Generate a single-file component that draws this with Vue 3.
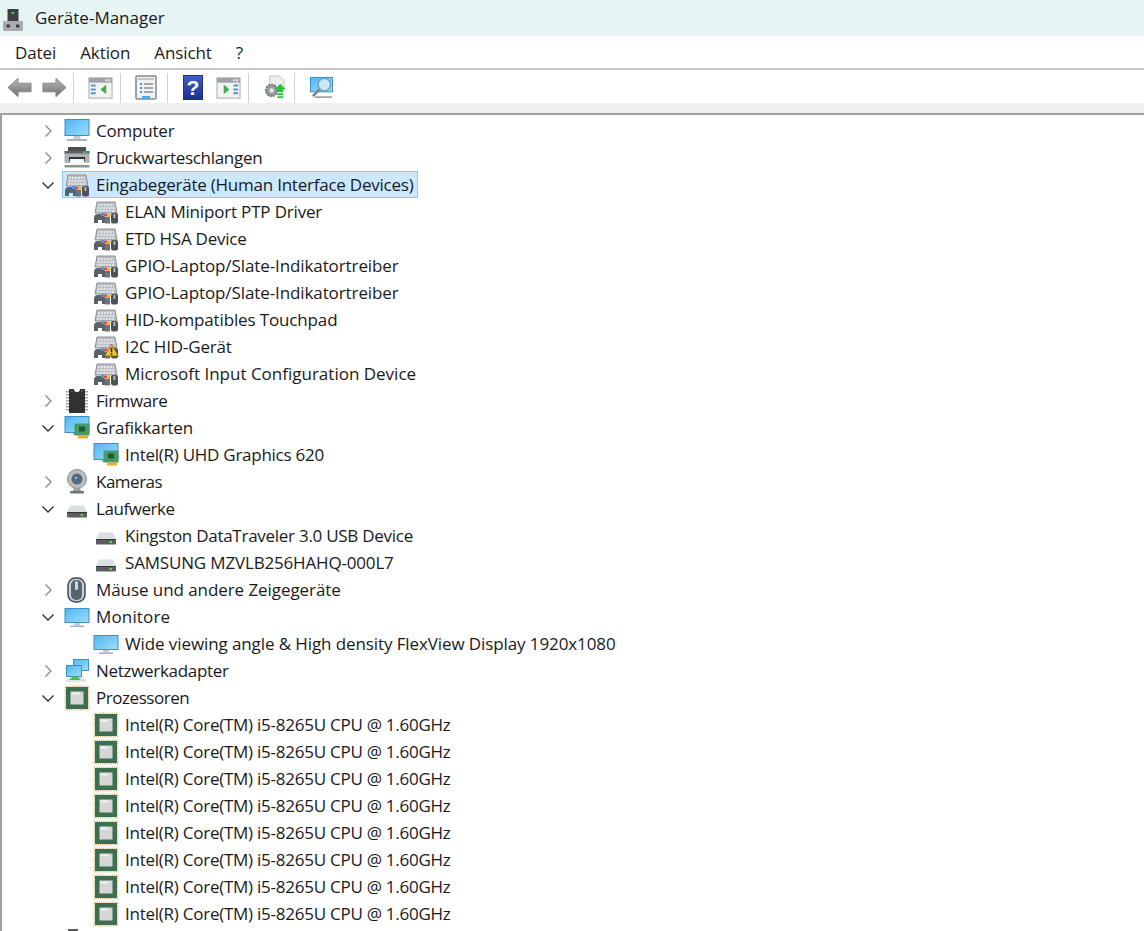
<script setup>
const cpu = 'Intel(R) Core(TM) i5-8265U CPU @ 1.60GHz'
const rows = [
  { t: 'Computer', l: 0, i: 'monitor', c: 'r', s: -0.2 },
  { t: 'Druckwarteschlangen', l: 0, i: 'printer', c: 'r', s: -0.3 },
  { t: 'Eingabegeräte (Human Interface Devices)', l: 0, i: 'hid', c: 'd', sel: true, s: -0.23 },
  { t: 'ELAN Miniport PTP Driver', l: 1, i: 'hid', s: -0.18 },
  { t: 'ETD HSA Device', l: 1, i: 'hid', s: -0.25 },
  { t: 'GPIO-Laptop/Slate-Indikatortreiber', l: 1, i: 'hid', s: -0.1 },
  { t: 'GPIO-Laptop/Slate-Indikatortreiber', l: 1, i: 'hid', s: -0.1 },
  { t: 'HID-kompatibles Touchpad', l: 1, i: 'hid', s: -0.14 },
  { t: 'I2C HID-Gerät', l: 1, i: 'hid', warn: true, s: -0.18 },
  { t: 'Microsoft Input Configuration Device', l: 1, i: 'hid', s: 0 },
  { t: 'Firmware', l: 0, i: 'chip', c: 'r', s: -0.45 },
  { t: 'Grafikkarten', l: 0, i: 'gpu', c: 'd', s: -0.18 },
  { t: 'Intel(R) UHD Graphics 620', l: 1, i: 'gpu', s: -0.26 },
  { t: 'Kameras', l: 0, i: 'cam', c: 'r', s: -0.5 },
  { t: 'Laufwerke', l: 0, i: 'drive', c: 'd', s: -0.43 },
  { t: 'Kingston DataTraveler 3.0 USB Device', l: 1, i: 'drive', s: -0.27 },
  { t: 'SAMSUNG MZVLB256HAHQ-000L7', l: 1, i: 'drive', s: -0.17 },
  { t: 'Mäuse und andere Zeigegeräte', l: 0, i: 'mouse', c: 'r', s: -0.07 },
  { t: 'Monitore', l: 0, i: 'display', c: 'd', s: 0.15 },
  { t: 'Wide viewing angle & High density FlexView Display 1920x1080', l: 1, i: 'display', s: -0.1 },
  { t: 'Netzwerkadapter', l: 0, i: 'net', c: 'r', s: -0.3 },
  { t: 'Prozessoren', l: 0, i: 'cpu', c: 'd', s: -0.45 },
  ...Array.from({ length: 8 }, () => ({ t: cpu, l: 1, i: 'cpu', s: -0.25 })),
  { t: '', l: 0, i: 'peek', s: 0 },
]
const tools = ['back', 'fwd', 'sep', 'panel-l', 'sep', 'props', 'sep', 'help', 'panel-r', 'sep', 'update', 'sep', 'scan']
const menus = ['Datei', 'Aktion', 'Ansicht', '?']
</script>

<template>
  <div class="win">
    <svg class="defs" width="0" height="0" aria-hidden="true">
      <defs>
        <linearGradient id="scr" x1="0" y1="0" x2="1" y2="1">
          <stop offset="0" stop-color="#52b8f2" /><stop offset="1" stop-color="#9cdcfa" />
        </linearGradient>
        <linearGradient id="gr" x1="0" y1="0" x2="0" y2="1">
          <stop offset="0" stop-color="#b8b8b8" /><stop offset="1" stop-color="#707070" />
        </linearGradient>
        <linearGradient id="hlp" x1="0" y1="0" x2="0" y2="1">
          <stop offset="0" stop-color="#3f5fc8" /><stop offset="1" stop-color="#1c2f8c" />
        </linearGradient>
      </defs>
      <symbol id="monitor" viewBox="0 0 26 26">
        <rect x="0.500" y="1" width="25" height="17" fill="#3d8fc4" />
        <rect x="1.500" y="2" width="23" height="15" fill="url(#scr)" />
        <rect x="9.500" y="18" width="7" height="3" fill="#c5ccd2" />
        <rect x="3" y="21" width="20" height="2" fill="#aab3ba" />
      </symbol>
      <symbol id="display" viewBox="0 0 26 26">
        <rect x="0.500" y="4" width="25" height="15" fill="#3d8fc4" />
        <rect x="1.500" y="5" width="23" height="13" fill="url(#scr)" />
        <rect x="10" y="19" width="6" height="2.500" fill="#c5ccd2" />
        <rect x="6" y="21.500" width="14" height="1.500" fill="#aab3ba" />
      </symbol>
      <symbol id="printer" viewBox="0 0 26 26">
        <rect x="4" y="2" width="18" height="5" fill="#4a4f52" />
        <rect x="0.500" y="7" width="25" height="11" rx="1" fill="#aeb2b4" />
        <rect x="0.500" y="6" width="25" height="2.500" fill="#5c6366" />
        <rect x="19" y="6.500" width="4" height="1.500" fill="#48c04c" />
        <rect x="5" y="12" width="16" height="4" fill="#2f3436" />
        <rect x="6" y="14" width="14" height="7" fill="#f6f6f6" />
        <rect x="0.500" y="20" width="25" height="2.500" fill="#8f9496" />
      </symbol>
      <symbol id="hid" viewBox="0 0 26 26">
        <path d="M4 3h18l2 11H2z" fill="#b9bfc4" stroke="#8d9499" />
        <path d="M5 6h16M4.500 9h17M4 12h18" stroke="#eef0f2" stroke-width="1.600" stroke-dasharray="2 1" />
        <path d="M1 24v-5q0-4 4-4h5l2 3v6H9v-3H5v3z" fill="#5b6267" />
        <rect x="18" y="14" width="7" height="10.500" rx="2" fill="#4a5257" />
        <rect x="20.500" y="15" width="1.800" height="4" fill="#b9c0c4" />
        <rect x="8" y="14" width="3" height="3" fill="#3aa0e6" />
        <rect x="11" y="14.500" width="3" height="3" fill="#e0503c" />
        <rect x="14" y="15" width="3.500" height="3" fill="#e9b93b" />
        <rect x="12" y="18" width="5" height="6.500" fill="#6e757a" />
      </symbol>
      <symbol id="warn" viewBox="0 0 16 14">
        <path d="M8 .8 15.400 13.400H.6z" fill="#f7c531" stroke="#7a5a10" stroke-width=".9" />
        <rect x="7.100" y="4.500" width="1.800" height="5" fill="#2b2b2b" />
        <rect x="7.100" y="10.400" width="1.800" height="1.800" fill="#2b2b2b" />
      </symbol>
      <symbol id="chip" viewBox="0 0 26 26">
        <path d="M5 1h5a3 3 0 0 0 6 0h5v24H5z" fill="#2f3133" />
        <path d="M7 3h2M17 3h2" stroke="#6b6e70" />
        <path d="M3.500 3v20M22.500 3v20" stroke="#a5a5a5" stroke-width="3" stroke-dasharray="1.500 1.500" />
      </symbol>
      <symbol id="gpu" viewBox="0 0 26 26">
        <rect x="0.500" y="1" width="25" height="17" fill="#3d8fc4" />
        <rect x="1.500" y="2" width="23" height="15" fill="url(#scr)" />
        <rect x="9" y="18" width="5" height="2" fill="#aab3ba" />
        <rect x="10.500" y="8.500" width="15" height="12" fill="#4a9a68" />
        <rect x="15" y="11.500" width="6" height="5" fill="#1e5a38" />
        <rect x="14" y="20.500" width="10" height="3" fill="#eeaa30" />
      </symbol>
      <symbol id="cam" viewBox="0 0 26 26">
        <circle cx="13" cy="10" r="9.500" fill="#b8bcbe" stroke="#8d9194" />
        <circle cx="13" cy="10" r="5.500" fill="#63676a" />
        <circle cx="13" cy="10" r="3" fill="#3e6f9a" />
        <circle cx="12" cy="9" r="1" fill="#cfe3f2" />
        <path d="M10 19h6l1 3H9z" fill="#9a9ea1" />
        <rect x="6" y="22" width="14" height="2.500" rx="1" fill="#6f7376" />
      </symbol>
      <symbol id="drive" viewBox="0 0 26 26">
        <path d="M6 9.500h14l3 6.500H3z" fill="#dcdfe1" />
        <rect x="3" y="16" width="20" height="5.500" rx="1" fill="#5a5e61" />
        <rect x="3" y="16" width="20" height="1" fill="#33373a" />
        <rect x="16.500" y="18" width="2.500" height="2" fill="#4ce04c" />
      </symbol>
      <symbol id="mouse" viewBox="0 0 26 26">
        <rect x="4" y="1" width="17" height="24" rx="7.500" fill="#c4d2de" stroke="#3e4a56" stroke-width="1.500" />
        <rect x="7" y="3" width="11" height="20" rx="5" fill="#59636c" />
        <rect x="11" y="4" width="3" height="9" rx="1.500" fill="#d4d8dc" />
      </symbol>
      <symbol id="net" viewBox="0 0 26 26">
        <rect x="9" y="1" width="16" height="12" fill="#3d8fc4" />
        <rect x="10" y="2" width="14" height="10" fill="url(#scr)" />
        <rect x="2" y="7" width="16" height="12" fill="#3d8fc4" />
        <rect x="3" y="8" width="14" height="10" fill="url(#scr)" />
        <path d="M1 22 6 19h11l5 3v2H1z" fill="#dfe3e6" />
        <path d="M11 17l6 5h-12z" fill="#48c04c" />
      </symbol>
      <symbol id="cpu" viewBox="0 0 26 26">
        <rect x="1.200" y="1.200" width="23.600" height="23.600" fill="none" stroke="#c9a24a" stroke-width="1" stroke-dasharray="1.200 1" />
        <rect x="2" y="2" width="22" height="22" fill="#3c6e50" />
        <rect x="6.500" y="6.500" width="13" height="13" fill="#d6d6d6" />
        <rect x="7.500" y="7.500" width="8" height="2" fill="#f0f0f0" />
      </symbol>
      <symbol id="peek" viewBox="0 0 26 26">
        <rect x="4" y="1" width="10" height="3" fill="#55595c" />
      </symbol>

      <symbol id="back" viewBox="0 0 26 26">
        <path d="M1 13 11.500 3.500v5H25v9H11.500v5z" fill="url(#gr)" stroke="#858585" />
      </symbol>
      <symbol id="fwd" viewBox="0 0 26 26">
        <path d="M25 13 14.500 3.500v5H1v9h13.500v5z" fill="url(#gr)" stroke="#858585" />
      </symbol>
      <symbol id="panel-l" viewBox="0 0 26 26">
        <rect x="1" y="3" width="24" height="21" fill="#f2f4f4" stroke="#a5a9ac" />
        <rect x="1" y="3" width="24" height="5" fill="#9ea3a7" />
        <rect x="18" y="4.500" width="2" height="2" fill="#eee" /><rect x="21" y="4.500" width="2" height="2" fill="#eee" />
        <path d="M3 11h5M3 15h5M3 19h5" stroke="#5a92d0" stroke-width="2" />
        <path d="M19 10v10l-6-5z" fill="#3fae4a" />
      </symbol>
      <symbol id="panel-r" viewBox="0 0 26 26">
        <rect x="1" y="3" width="24" height="21" fill="#f2f4f4" stroke="#a5a9ac" />
        <rect x="1" y="3" width="24" height="5" fill="#9ea3a7" />
        <rect x="18" y="4.500" width="2" height="2" fill="#eee" /><rect x="21" y="4.500" width="2" height="2" fill="#eee" />
        <path d="M18 11h5M18 15h5M18 19h5" stroke="#5a92d0" stroke-width="2" />
        <path d="M8 10v10l6-5z" fill="#3fae4a" />
      </symbol>
      <symbol id="props" viewBox="0 0 22 25">
        <rect x="1" y="1" width="20" height="23" rx="1" fill="#f1f2f3" stroke="#85898c" stroke-width="1.500" />
        <rect x="3" y="3" width="16" height="2" fill="#c4c8cb" />
        <path d="M5 9h2M5 13h2M5 17h2" stroke="#5a92d0" stroke-width="2" />
        <path d="M9 9h9M9 13h9M9 17h9" stroke="#8c9094" stroke-width="1.500" />
        <rect x="7" y="21" width="8" height="3" fill="#3fb0e8" />
      </symbol>
      <symbol id="update" viewBox="0 0 26 26">
        <path d="M8 1h10l5 5v7H8z" fill="#eceded" stroke="#c2c4c6" />
        <circle cx="10" cy="16" r="6" fill="#9a9ea1" stroke="#747779" stroke-width="2" stroke-dasharray="2 1" />
        <circle cx="10" cy="16" r="2.200" fill="#eee" />
        <path d="M19 9l6 6h-3v3h-6v-3h-3z" fill="#2fbf3c" />
        <path d="M16 20h6M16 23h6" stroke="#2fbf3c" stroke-width="2" />
      </symbol>
      <symbol id="scan" viewBox="0 0 26 26">
        <rect x="1" y="2" width="24" height="16" fill="#3d8fc4" />
        <rect x="2" y="3" width="22" height="14" fill="url(#scr)" />
        <path d="M6 23h18" stroke="#8b9195" stroke-width="1.500" />
        <circle cx="16" cy="10" r="6.500" fill="#c6e9f8" stroke="#6f9fb8" stroke-width="1.500" />
        <path d="M11 15 4 22" stroke="#7a8186" stroke-width="2.500" />
      </symbol>
    </svg>

    <header class="title">
      <svg class="app-ico" viewBox="0 0 20 22">
        <rect x="4.500" y="0" width="11" height="13" fill="#3c4042" />
        <rect x="8.500" y="3" width="2.500" height="2" fill="#35d04a" />
        <rect x="0" y="12" width="20" height="10" rx="1" fill="#a9adb0" />
        <rect x="3.500" y="15.500" width="3.500" height="3" fill="#3c4042" />
        <rect x="13" y="15.500" width="3.500" height="3" fill="#3c4042" />
      </svg>
      <span>Geräte-Manager</span>
    </header>

    <nav class="menu">
      <span v-for="m in menus" :key="m">{{ m }}</span>
    </nav>

    <div class="toolbar">
      <template v-for="(b, k) in tools" :key="k">
        <i v-if="b === 'sep'" class="sep"></i>
        <svg v-else-if="b === 'help'" class="tool t-help" viewBox="0 0 20 25">
          <rect x="0.500" y="0.500" width="19" height="24" fill="url(#hlp)" stroke="#1c2f8c" />
          <text x="10" y="20" text-anchor="middle" class="qm">?</text>
        </svg>
        <svg v-else class="tool" :class="'t-' + b"><use :href="'#' + b" /></svg>
      </template>
    </div>
    <div class="band"></div>

    <main class="tree">
      <div v-for="(r, k) in rows" :key="k" class="row" :class="'lvl' + r.l">
        <svg v-if="r.c" class="chev" viewBox="0 0 14 14">
          <path v-if="r.c === 'r'" d="M4.500 1.500 10 7l-5.500 5.500" fill="none" stroke="#8a8a8a" stroke-width="1.300" />
          <path v-else d="M1.500 4.500 7 10l5.500-5.500" fill="none" stroke="#2c2c2c" stroke-width="1.300" />
        </svg>
        <div class="item" :class="{ sel: r.sel }">
          <span class="ico">
            <svg class="ico-svg"><use :href="'#' + r.i" /></svg>
            <svg v-if="r.warn" class="warn"><use href="#warn" /></svg>
          </span>
          <span class="label" :style="{ letterSpacing: r.s + 'px' }">{{ r.t }}</span>
        </div>
      </div>
    </main>
  </div>
</template>

<style scoped>
.defs { position: absolute; }
.win {
  width: 1144px; height: 931px; overflow: hidden; background: #fff;
  font-family: "Open Sans", "Noto Sans", sans-serif; color: #1a1a1a;
  display: flex; flex-direction: column;
}
.title {
  height: 36px; flex: none; background: #e6f4f4;
  display: flex; align-items: center; gap: 12px; padding-left: 3px;
  font-size: 17px; line-height: 34px;
}
.title span { margin-top: 0; }
.app-ico { width: 20px; height: 22px; margin-top: 3px; flex: none; }
.menu {
  height: 32px; flex: none; display: flex; align-items: center; gap: 24px;
  padding: 0 0 0 15px; box-sizing: border-box; font-size: 17px; letter-spacing: -.1px;
}
.toolbar {
  height: 35px; flex: none; display: flex; align-items: center; padding: 2px 0 0 7px;
  box-sizing: border-box; border-top: 2px solid #c8c8c8;
}
.tool { width: 25px; height: 25px; flex: none; margin-right: 10px; }
.t-fwd { margin-right: 6px; }
.t-panel-l { margin-left: 14px; margin-right: 7px; }
.t-props { margin-left: 14px; margin-right: 10px; width: 22px; }
.t-help { margin-left: 15px; margin-right: 13px; width: 20px; }
.t-panel-r { margin-right: 7px; }
.t-update { margin-left: 13px; margin-right: 7px; }
.t-scan { margin-left: 14px; }
.qm { font-family: "Liberation Sans", sans-serif; font-weight: 700; font-size: 21px; fill: #fff; }
.sep { width: 1px; height: 30px; background: #cfcfcf; flex: none; }
.band { height: 12px; flex: none; background: #f0f0f0; border-bottom: 2px solid #a0a0a0; box-sizing: border-box; }
.tree {
  flex: 1; min-height: 0; border-left: 2px solid #a0a0a0; padding-top: 2px;
}
.row { height: 27px; display: flex; align-items: center; position: relative; }
.lvl0 { padding-left: 60px; }
.lvl1 { padding-left: 89px; }
.chev { position: absolute; left: 39px; top: 7px; width: 14px; height: 14px; }
.item {
  display: flex; align-items: center; gap: 6px; height: 27px; padding: 0 4px 0 1px;
  border: 1px solid transparent; box-sizing: border-box;
}
.item.sel { background: #cce8ff; border-color: #90c8f0; }
.ico { position: relative; width: 26px; height: 26px; flex: none; }
.ico-svg { width: 26px; height: 26px; display: block; }
.warn { position: absolute; left: 11px; top: 9px; width: 15px; height: 14px; }
.label { font-size: 17px; white-space: nowrap; line-height: 25px; }
</style>

<style>
html, body { margin: 0; overflow: hidden; background: #fff; }
</style>
